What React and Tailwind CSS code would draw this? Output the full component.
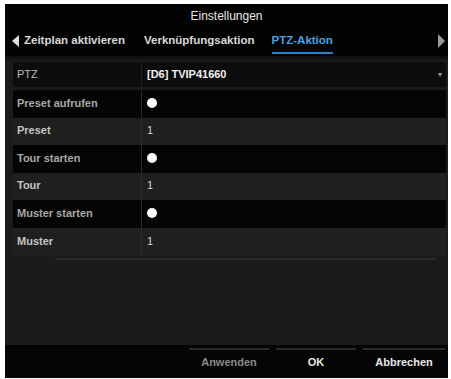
export default function App() {
  const rows = [
    { label: "Preset aufrufen", value: "dot", dark: true },
    { label: "Preset", value: "1" },
    { label: "Tour starten", value: "dot", dark: true },
    { label: "Tour", value: "1" },
    { label: "Muster starten", value: "dot", dark: true },
    { label: "Muster", value: "1" },
  ];
  const font = { fontFamily: '"Liberation Sans", Arial, sans-serif' };
  return (
    <div className="w-[451px] h-[379px] bg-white pt-[4px] pl-[5px]" style={font}>
      <div className="w-[443px] h-[374px] bg-[#1b1b1b] flex flex-col">
        <div className="h-[23px] bg-[#030303] flex items-center justify-center text-[12px] text-[#e6e6e6] pt-[1px]">
          Einstellungen
        </div>
        <div className="h-[29px] bg-[#030303] flex items-center text-[11.5px] font-bold text-[#d8d8d8] relative pb-[2px]">
          <div className="w-0 h-0 border-y-[6px] border-y-transparent border-r-[7px] border-r-[#e0e0e0] ml-[7px]"></div>
          <span className="ml-[5px]">Zeitplan aktivieren</span>
          <span className="ml-[19px]">Verknüpfungsaktion</span>
          <span className="ml-[17px] text-[#4aa3e8] relative">
            PTZ-Aktion
            <span className="absolute left-0 right-0 bottom-[-5px] h-[2px] bg-[#2f7fc4]"></span>
          </span>
          <div className="ml-auto mr-[3px] w-0 h-0 border-y-[7px] border-y-transparent border-l-[7px] border-l-[#9a9a9a]"></div>
        </div>
        <div className="h-[5px] bg-gradient-to-b from-[#0a0a0a] to-[#1b1b1b]"></div>
        <div className="ml-[8px] mr-[2px] mt-[1px]">
          <div className="h-[25px] bg-[#0c0c0c] rounded-[2px] flex items-center text-[11px]">
            <div className="w-[129px] pl-[4px] text-[#bdbdbd] border-r border-[#222] h-full flex items-center pb-[1px]">PTZ</div>
            <div className="flex-1 pl-[5px] text-[#f0f0f0] font-bold pb-[1px]">[D6] TVIP41660</div>
            <div className="mr-[4px] text-[#999] text-[8px]">▾</div>
          </div>
          <div className="mt-[3px]">
            {rows.map((r, i) => (
              <div
                key={i}
                className={`h-[27.6px] flex items-stretch text-[11px] ${r.dark ? "bg-[#050505]" : "bg-[#1f1f1f]"}`}
              >
                <div className={`w-[129px] pl-[4px] pb-[2px] flex items-center border-r border-[#2a2a2a] ${r.dark ? "text-[#a8a8a8]" : "text-[#c4c4c4]"} font-bold`}>
                  {r.label}
                </div>
                <div className="flex-1 pl-[5px] pb-[2px] flex items-center text-[#d8d8d8]">
                  {r.value === "dot" ? (
                    <div className="w-[10px] h-[10px] rounded-full bg-white"></div>
                  ) : (
                    <span>{r.value}</span>
                  )}
                </div>
              </div>
            ))}
            <div className="h-[2px] bg-[#2a2a2a] ml-[42px] mr-[10px] mt-[2px]"></div>
          </div>
        </div>
        <div className="flex-1"></div>
        <div className="h-[33px] bg-[#050505] flex items-center justify-end pr-[3px] gap-[7px] text-[11px] font-bold">
          <div className="w-[80px] h-[27px] border-t-2 border-[#2a2a2a] flex items-center justify-center text-[#8a8a8a]">Anwenden</div>
          <div className="w-[80px] h-[27px] border-t-2 border-[#2a2a2a] flex items-center justify-center text-[#e8e8e8]">OK</div>
          <div className="w-[82px] h-[27px] border-t-2 border-[#2a2a2a] flex items-center justify-center text-[#e8e8e8]">Abbrechen</div>
        </div>
      </div>
    </div>
  );
}
